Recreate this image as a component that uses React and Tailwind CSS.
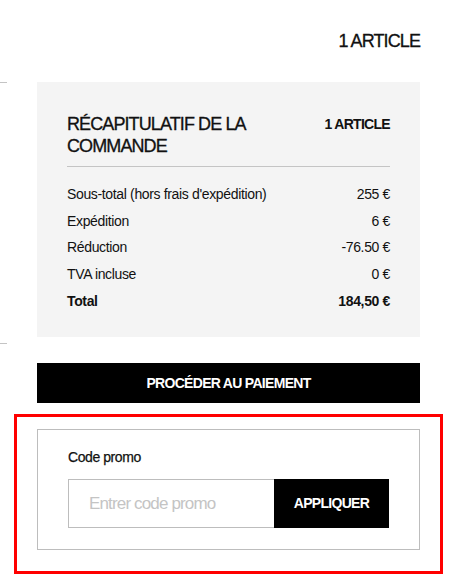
export default function App() {
  const rows = [
    ["Sous-total (hors frais d'expédition)", "255 €"],
    ["Expédition", "6 €"],
    ["Réduction", "-76.50 €"],
    ["TVA incluse", "0 €"],
  ];
  return (
    <div className="w-[474px] h-[586px] bg-white text-[#111] font-['Liberation_Sans',Arial,sans-serif] overflow-hidden">
      <div className="flex justify-end pt-[29px] pr-[54px]">
        <span className="text-[18px] leading-[24px] tracking-[-0.05em] [-webkit-text-stroke:0.3px_#111]">1 ARTICLE</span>
      </div>
      <div className="mt-[29px] flex items-start">
        <div className="w-[7px] h-[262px] border-y border-[#c4c4c4]" />
        <div className="ml-[30px] w-[383px]">
          <div className="h-[255px] bg-[#f4f4f4] pt-[31px] px-[30px]">
            <div className="flex items-start gap-4 pb-[9px] border-b border-[#c4c4c4]">
              <h2 className="flex-1 text-[18px] leading-[22px] tracking-[-0.05em] [-webkit-text-stroke:0.3px_#111]">
                RÉCAPITULATIF DE LA COMMANDE
              </h2>
              <span className="text-[14px] leading-[22px] font-bold tracking-[-0.05em]">1 ARTICLE</span>
            </div>
            <div className="mt-[14px] text-[14px] tracking-[-0.025em]">
              {rows.map(([l, v]) => (
                <div key={l} className="flex justify-between leading-[26.67px]">
                  <span>{l}</span>
                  <span>{v}</span>
                </div>
              ))}
              <div className="flex justify-between leading-[26.67px] font-bold">
                <span>Total</span>
                <span>184,50 €</span>
              </div>
            </div>
          </div>
          <button className="mt-[26px] w-full h-[40px] bg-black text-white text-[14px] font-bold tracking-[-0.05em] flex items-center justify-center">
            PROCÉDER AU PAIEMENT
          </button>
          <div className="mt-[11px] -mx-[23px] border-[3px] border-[#ff0000] pt-[12px] px-[20px] pb-[21px]">
            <div className="border border-[#bdbdbd] pt-[17px] px-[30px] pb-[21px]">
              <div className="text-[14px] leading-[20px] tracking-[-0.03em] [-webkit-text-stroke:0.25px_#111]">Code promo</div>
              <div className="mt-[12px] flex h-[49px]">
                <input
                  className="flex-1 min-w-0 border border-[#bdbdbd] border-r-0 pl-[20px] text-[17px] tracking-[-0.05em] outline-none placeholder:text-[#c4c4c4] bg-white"
                  placeholder="Entrer code promo"
                />
                <button className="w-[115px] bg-black text-white text-[14px] font-bold tracking-[-0.05em] flex items-center justify-center">
                  APPLIQUER
                </button>
              </div>
            </div>
          </div>
        </div>
      </div>
    </div>
  );
}
